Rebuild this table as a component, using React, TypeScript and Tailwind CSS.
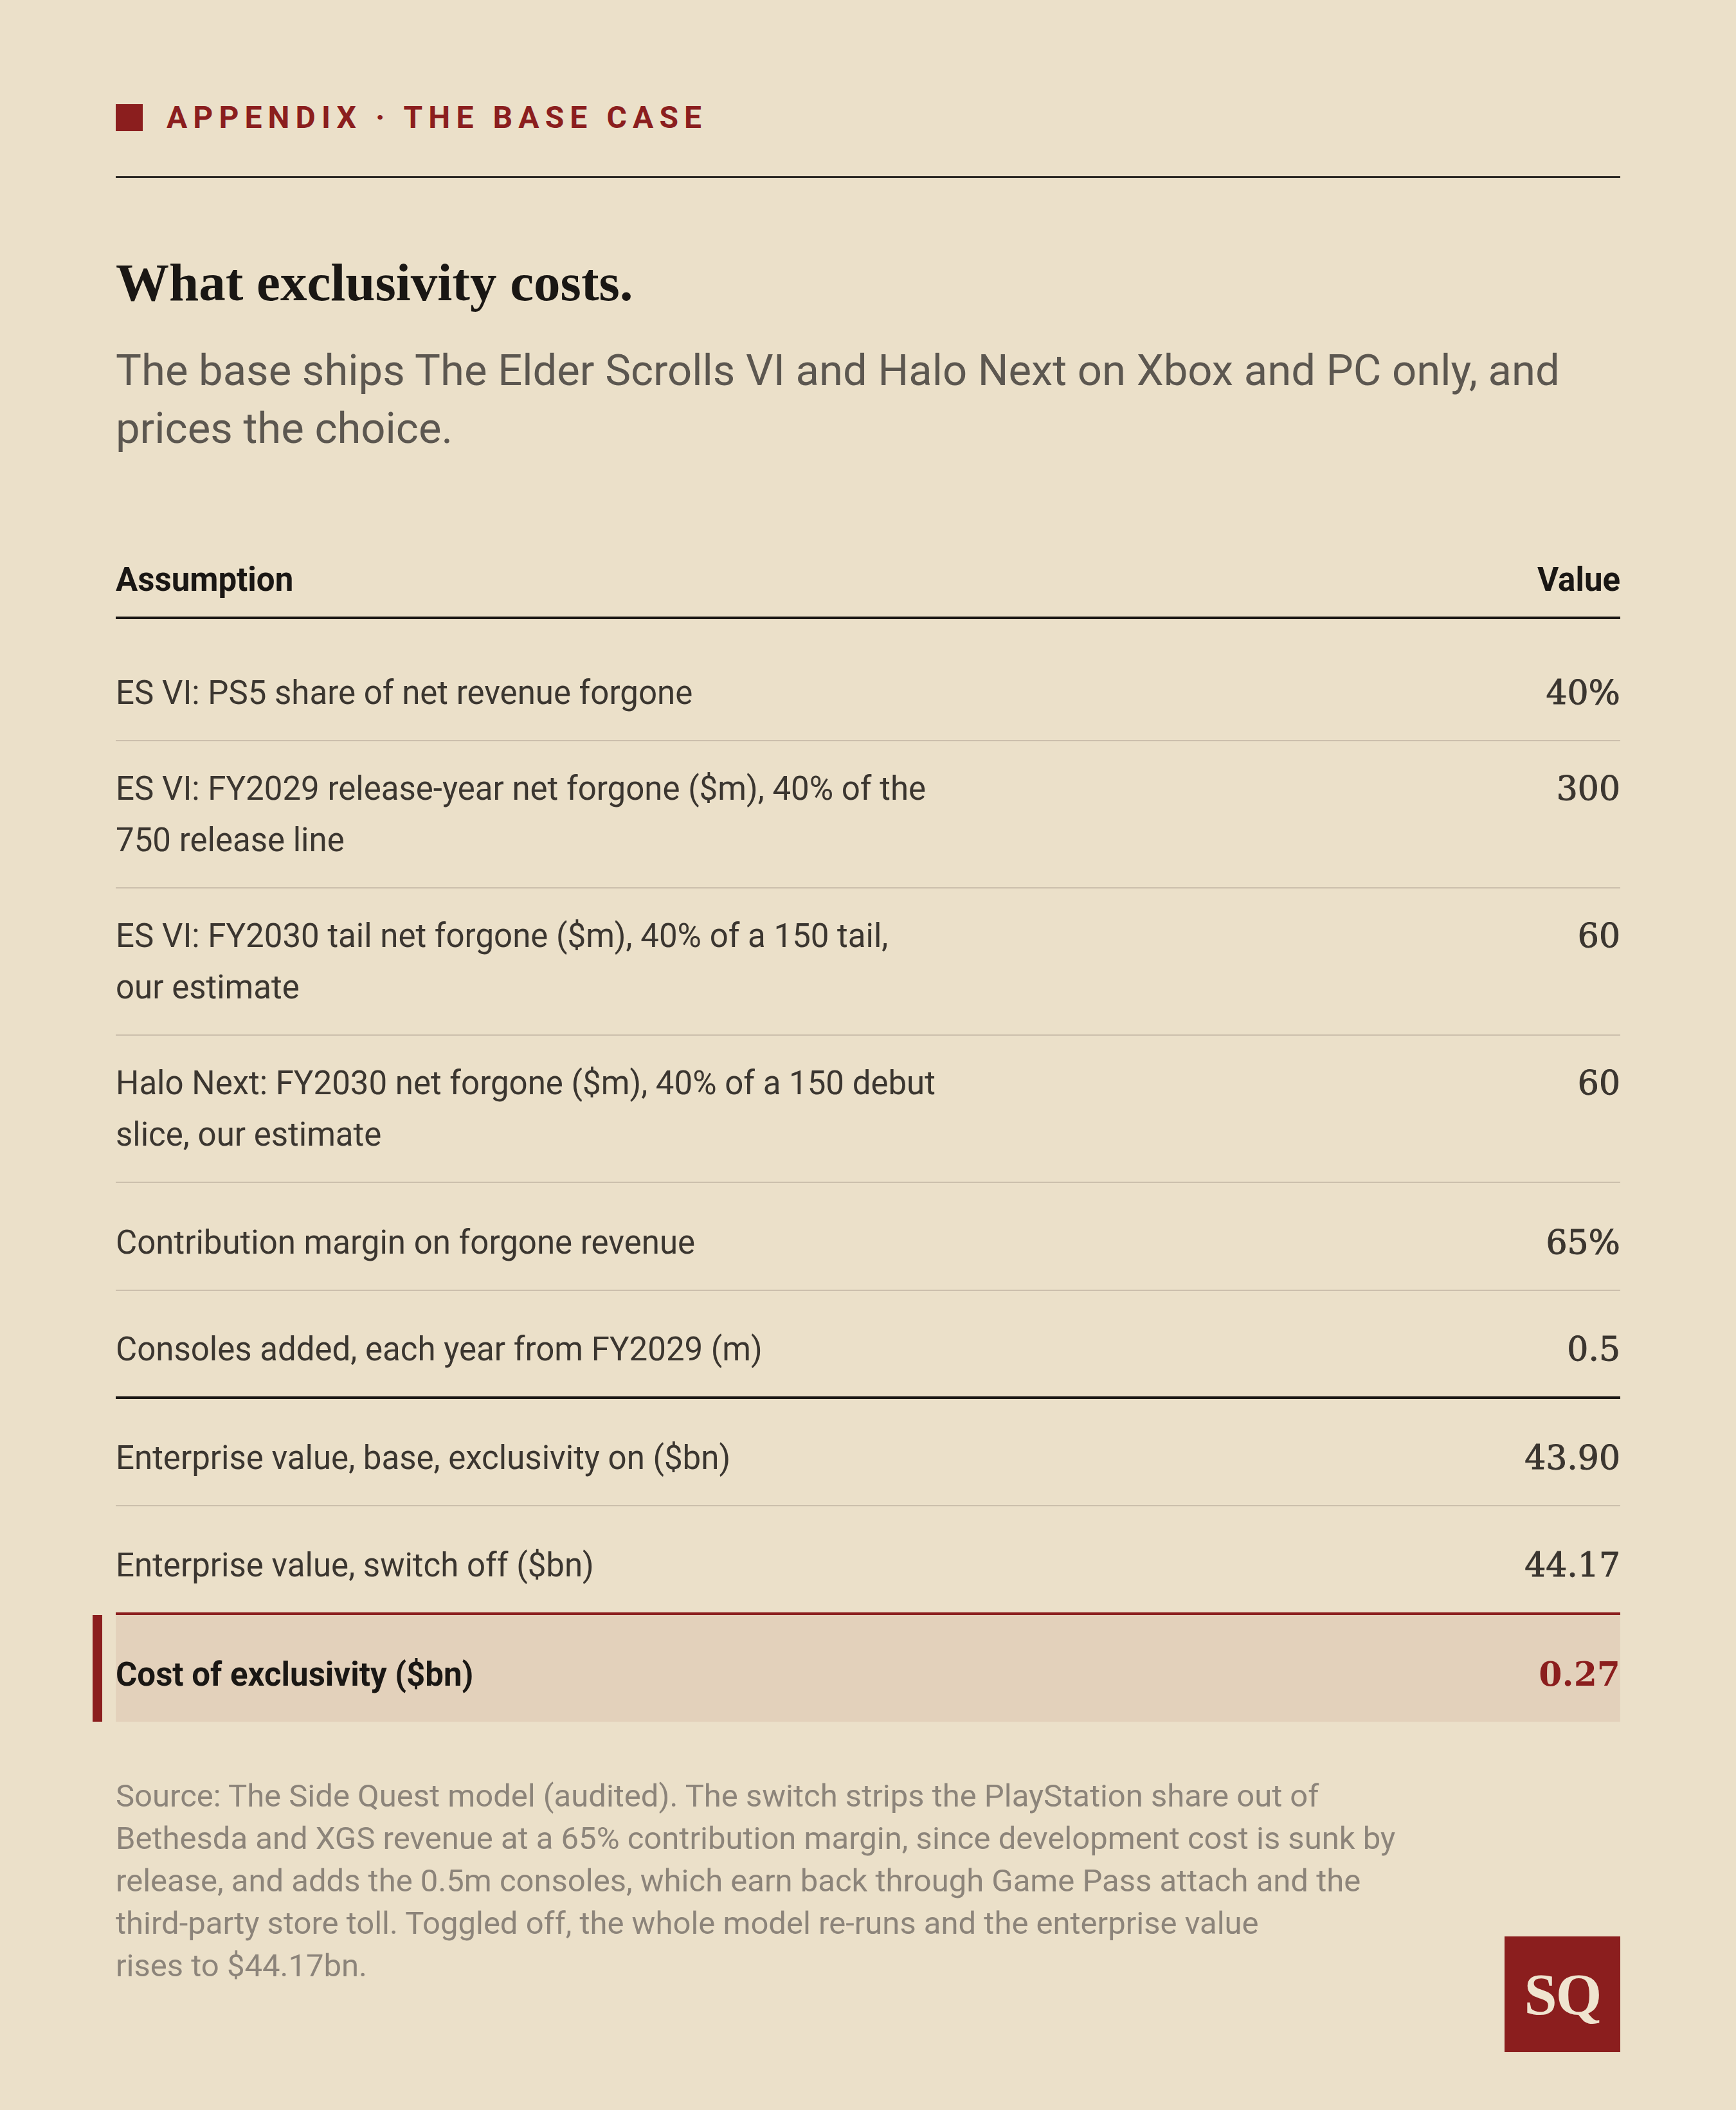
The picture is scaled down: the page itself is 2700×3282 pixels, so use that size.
const rows = [
  { label: "ES VI: PS5 share of net revenue forgone", value: "40%" },
  { label: "ES VI: FY2029 release-year net forgone ($m), 40% of the 750 release line", value: "300" },
  { label: "ES VI: FY2030 tail net forgone ($m), 40% of a 150 tail, our estimate", value: "60" },
  { label: "Halo Next: FY2030 net forgone ($m), 40% of a 150 debut slice, our estimate", value: "60" },
  { label: "Contribution margin on forgone revenue", value: "65%" },
  { label: "Consoles added, each year from FY2029 (m)", value: "0.5" },
];

const results = [
  { label: "Enterprise value, base, exclusivity on ($bn)", value: "43.90" },
  { label: "Enterprise value, switch off ($bn)", value: "44.17" },
];

function Row({ label, value, className }: { label: string; value: string; className: string }) {
  return (
    <div className={`flex flex-col justify-end py-[33px] ${className}`}>
      <div className="flex items-baseline justify-between gap-10">
        <span className="max-w-[1282px] text-[51px] leading-[80px] text-[#3b3630]">{label}</span>
        <span className="shrink-0 font-['DejaVu_Serif',serif] text-[52px] leading-[80px] text-[#3b3630] [-webkit-text-stroke:1px_#3b3630]">
          {value}
        </span>
      </div>
    </div>
  );
}

export default function App() {
  return (
    <div className="min-h-screen bg-[#ebe0c9] px-[180px] pt-[159px] pb-[90px] font-['Roboto','Liberation_Sans',sans-serif]">
      <header className="flex items-center gap-[37px] border-b-[3px] border-[#2b2824] pb-[67px]">
        <span className="size-[42px] bg-[#8b1e1e]" />
        <span className="text-[48px] leading-none font-bold tracking-[0.19em] text-[#8b1e1e]">
          APPENDIX · THE BASE CASE
        </span>
      </header>

      <h1 className="mt-[121px] font-['Liberation_Serif',serif] text-[83px] leading-none font-bold text-[#1a1714]">
        What exclusivity costs.
      </h1>
      <p className="mt-[50px] text-[67px] leading-[90px] text-[#5c5750]">
        The base ships The Elder Scrolls VI and Halo Next on Xbox and PC only, and prices the choice.
      </p>

      <section className="mt-[151px]">
        <div className="flex items-baseline justify-between border-b-4 border-[#1a1714] pb-[17px] text-[51px] leading-[80px] font-bold text-[#1a1714]">
          <span>Assumption</span>
          <span>Value</span>
        </div>

        <div className="pt-[22px]">
          {rows.map((row, i) => (
            <Row
              key={row.label}
              {...row}
              className={
                i === rows.length - 1
                  ? "min-h-[168px] border-b-4 border-[#1a1714]"
                  : "min-h-[168px] border-b-2 border-[#cbbfac]"
              }
            />
          ))}
          {results.map((row, i) => (
            <Row
              key={row.label}
              {...row}
              className={i === 0 ? "min-h-[167px] border-b-2 border-[#cbbfac]" : "min-h-[165px]"}
            />
          ))}

          <div className="relative flex min-h-[170px] flex-col justify-end border-t-4 border-[#8b1e1e] bg-[#e3d1bb] py-[33px]">
            <span className="absolute top-0 bottom-0 -left-[36px] w-[15px] bg-[#8b1e1e]" />
            <div className="flex items-baseline justify-between gap-10">
              <span className="text-[51px] leading-[80px] font-bold text-[#1a1714]">Cost of exclusivity ($bn)</span>
              <span className="font-['DejaVu_Serif',serif] text-[52px] leading-[80px] font-bold text-[#8b1e1e]">
                0.27
              </span>
            </div>
          </div>
        </div>
      </section>

      <footer className="mt-[83px] flex items-start justify-between">
        <p className="max-w-[2070px] text-[49px] leading-[66px] text-[#8c847a]">
          Source: The Side Quest model (audited). The switch strips the PlayStation share out of Bethesda and XGS
          revenue at a 65% contribution margin, since development cost is sunk by release, and adds the 0.5m
          consoles, which earn back through Game Pass attach and the{" "}
          <span className="whitespace-nowrap">third-party</span> store toll. Toggled off, the whole model{" "}
          <span className="whitespace-nowrap">re-runs</span> and the enterprise value{" "}
          <span className="whitespace-nowrap">rises to $44.17bn.</span>
        </p>
        <div className="mt-[251px] flex size-[180px] shrink-0 items-center justify-center bg-[#8b1e1e] font-['Liberation_Serif',serif] text-[92px] leading-none font-bold tracking-[-0.02em] text-[#efe4cf]">
          SQ
        </div>
      </footer>
    </div>
  );
}
